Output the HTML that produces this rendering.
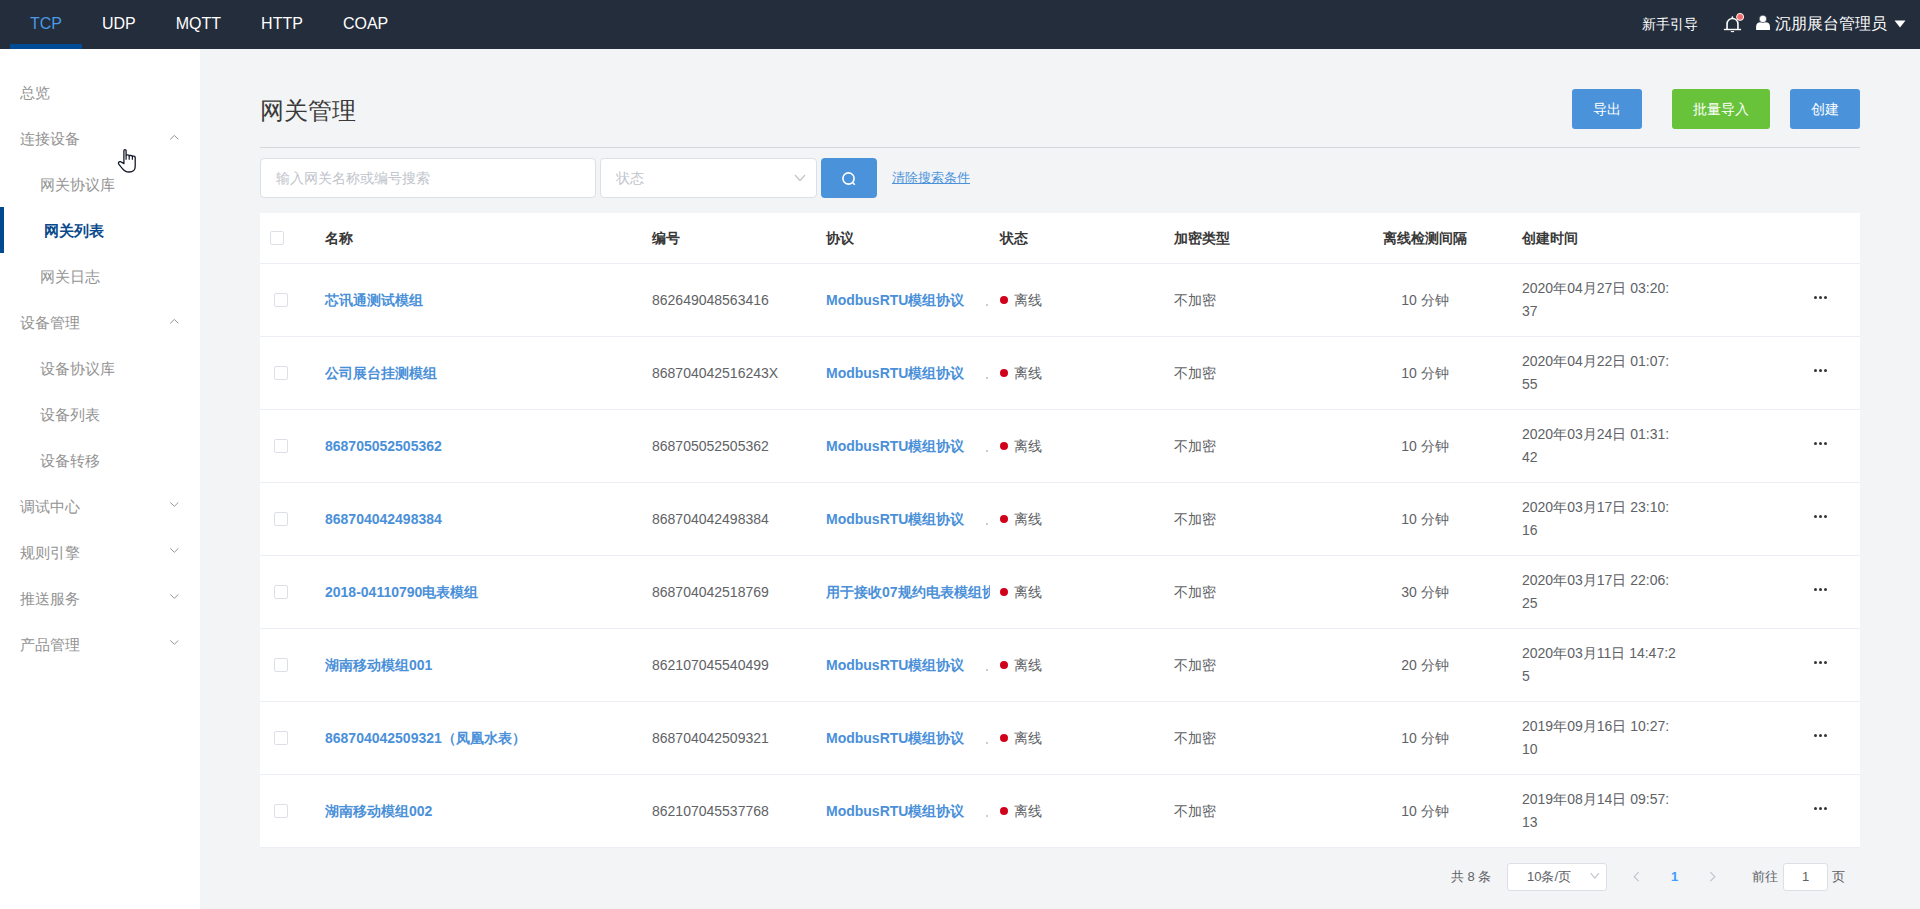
<!DOCTYPE html>
<html><head><meta charset="utf-8">
<style>
*{box-sizing:border-box;margin:0;padding:0}
html,body{width:1920px;height:909px;overflow:hidden}
body{font-family:"Liberation Sans",sans-serif;background:#f3f4f6;position:relative;color:#606266}
.top{position:absolute;left:0;top:0;width:1920px;height:49px;background:#232d3c}
.nav{position:absolute;left:10px;top:0;height:49px;display:flex}
.nav div{padding:0 20px;height:49px;line-height:48px;font-size:16px;color:#fff;position:relative}
.nav div.act{color:#4b9ae6}
.nav div.act:after{content:"";position:absolute;left:0;right:0;bottom:0;height:5px;background:#004c97}
.tr{position:absolute;top:0;height:49px;color:#fff}
.side{position:absolute;left:0;top:49px;width:200px;height:860px;background:#fff}
.si{position:absolute;left:20px;height:46px;line-height:48px;font-size:15px;color:#939393}
.si.sub{left:40px}
.si.act{left:44px;color:#0a4a8c;font-weight:bold}
.abar{position:absolute;left:0;top:207px;width:4px;height:46px;background:#004a8f}
.chev{position:absolute;left:170px;width:9px;height:9px}
.title{position:absolute;left:260px;top:91px;font-size:24px;line-height:40px;color:#3a3a3a}
.btn{position:absolute;top:89px;height:40px;line-height:40px;border-radius:3px;color:#fff;font-size:14px;text-align:center}
.hr{position:absolute;left:260px;top:147px;width:1600px;height:1px;background:#d5d7db}
.inp{position:absolute;top:158px;height:40px;background:#fff;border:1px solid #dcdfe6;border-radius:4px;font-size:14px;line-height:38px;color:#c0c4cc;padding-left:15px}
.sbtn{position:absolute;left:821px;top:158px;width:56px;height:40px;background:#4a93db;border-radius:4px}
.clear{position:absolute;left:892px;top:168px;font-size:13px;line-height:20px;color:#4a93db;text-decoration:underline}
.table{position:absolute;left:260px;top:213px;width:1600px;height:634px;background:#fff}
.th{position:absolute;top:0;height:50px;line-height:50px;font-size:14px;font-weight:bold;color:#383838;white-space:nowrap}
.hline{position:absolute;left:0;width:1600px;height:1px;background:#ebeef5}
.row{position:absolute;left:260px;width:1600px;height:73px}
.cb{position:absolute;width:14px;height:14px;border:1px solid #dcdfe6;border-radius:2px;background:#fff}
.rcb{left:14px;top:29px}
.c{position:absolute;top:0;height:72px;line-height:72px;font-size:14px;white-space:nowrap;color:#606266}
.name{left:65px;color:#4a90d9;font-weight:bold}
.num{left:392px}
.proto{left:566px;width:164px;overflow:hidden;color:#4a90d9;font-weight:bold}
.pdot{position:absolute;left:726px;top:40px;width:2px;height:2px;background:#bbb;border-radius:1px}
.status{left:740px}
.rdot{display:inline-block;width:8px;height:8px;border-radius:50%;background:#d0021b;margin-right:6px;vertical-align:middle;position:relative;top:-1px}
.enc{left:914px}
.intv{left:1078px;width:174px;text-align:center}
.date{left:1262px;line-height:23px;top:13px;height:auto;white-space:nowrap}
.more{position:absolute;left:1554px;top:32px;width:13px;height:4px;display:flex;justify-content:space-between}
.more i{display:block;width:3px;height:3px;border-radius:50%;background:#333}
.pg{position:absolute;top:863px;height:28px;line-height:28px;font-size:13px;color:#606266;white-space:nowrap}
</style></head><body>
<div class="top">
 <div class="nav"><div class="act">TCP</div><div>UDP</div><div>MQTT</div><div>HTTP</div><div>COAP</div></div>
 <div class="tr" style="left:1642px;line-height:48px;font-size:14px">新手引导</div>
 <svg style="position:absolute;left:1715px;top:8px" width="60" height="30" viewBox="0 0 60 30">
  <path d="M12.05 21.45 V16 C12.05 12.8 14.5 10.45 17.5 10.45 C20.5 10.45 22.95 12.8 22.95 16 V21.45" fill="none" stroke="#fff" stroke-width="1.6"/>
  <circle cx="17.4" cy="9.2" r="0.9" fill="#fff"/>
  <path d="M8.9 21.5 H26.1" stroke="#fff" stroke-width="1.4"/>
  <path d="M15.8 23.6 H19.1" stroke="#fff" stroke-width="1.1"/>
  <circle cx="25.1" cy="8.9" r="3.5" fill="#f36b6b" stroke="#fff" stroke-width="1"/>
  <path d="M41.1 22.1 V18.4 C41.1 15.9 43 14.3 45.5 14.3 H50.6 C53.1 14.3 55 15.9 55 18.4 V22.1 Z" fill="#fff"/>
  <circle cx="47.9" cy="10.9" r="3.7" fill="#fff" stroke="#232d3c" stroke-width="0.6"/>
 </svg>
 <div class="tr" style="left:1775px;line-height:47px;font-size:16px">沉朋展台管理员</div>
 <svg style="position:absolute;left:1894px;top:20px" width="12" height="8" viewBox="0 0 12 8"><path d="M0.5 0.5 H11.5 L6 7.5Z" fill="#fff"/></svg>
</div>
<div class="side">
 <div class="si" style="top:20px">总览</div>
 <div class="si" style="top:66px">连接设备</div>
 <div class="si sub" style="top:112px">网关协议库</div>
 <div class="si act" style="top:158px">网关列表</div>
 <div class="si sub" style="top:204px">网关日志</div>
 <div class="si" style="top:250px">设备管理</div>
 <div class="si sub" style="top:296px">设备协议库</div>
 <div class="si sub" style="top:342px">设备列表</div>
 <div class="si sub" style="top:388px">设备转移</div>
 <div class="si" style="top:434px">调试中心</div>
 <div class="si" style="top:480px">规则引擎</div>
 <div class="si" style="top:526px">推送服务</div>
 <div class="si" style="top:572px">产品管理</div>
 <svg class="chev" style="top:84px" width="10" height="7" viewBox="0 0 10 7"><path d="M0.3 5.5 L4.8 1.2 L9.3 5.5" fill="none" stroke="#8f9399" stroke-width="1.1"/></svg><svg class="chev" style="top:268px" width="10" height="7" viewBox="0 0 10 7"><path d="M0.3 5.5 L4.8 1.2 L9.3 5.5" fill="none" stroke="#8f9399" stroke-width="1.1"/></svg><svg class="chev" style="top:451px" width="10" height="7" viewBox="0 0 10 7"><path d="M0.3 1.2 L4.8 5.5 L9.3 1.2" fill="none" stroke="#8f9399" stroke-width="1.1"/></svg><svg class="chev" style="top:497px" width="10" height="7" viewBox="0 0 10 7"><path d="M0.3 1.2 L4.8 5.5 L9.3 1.2" fill="none" stroke="#8f9399" stroke-width="1.1"/></svg><svg class="chev" style="top:543px" width="10" height="7" viewBox="0 0 10 7"><path d="M0.3 1.2 L4.8 5.5 L9.3 1.2" fill="none" stroke="#8f9399" stroke-width="1.1"/></svg><svg class="chev" style="top:589px" width="10" height="7" viewBox="0 0 10 7"><path d="M0.3 1.2 L4.8 5.5 L9.3 1.2" fill="none" stroke="#8f9399" stroke-width="1.1"/></svg>
</div>
<div class="abar"></div>
<div class="title">网关管理</div>
<div class="btn" style="left:1572px;width:70px;background:#4a93db">导出</div>
<div class="btn" style="left:1672px;width:98px;background:#68c23a">批量导入</div>
<div class="btn" style="left:1790px;width:70px;background:#4a93db">创建</div>
<div class="hr"></div>
<div class="inp" style="left:260px;width:336px">输入网关名称或编号搜索</div>
<div class="inp" style="left:600px;width:217px">状态
 <svg style="position:absolute;left:193px;top:15px" width="12" height="8" viewBox="0 0 12 8"><path d="M1 1 L6 6.5 L11 1" fill="none" stroke="#c0c4cc" stroke-width="1.2"/></svg>
</div>
<div class="sbtn"><svg style="position:absolute;left:20px;top:13px" width="16" height="16" viewBox="0 0 16 16"><circle cx="7.5" cy="7.5" r="5.6" fill="none" stroke="#fff" stroke-width="1.6"/><path d="M11.5 11.5 L13.8 13.8" stroke="#fff" stroke-width="1.6"/></svg></div>
<div class="clear">清除搜索条件</div>
<div class="table">
 <div class="cb" style="left:10px;top:18px"></div>
 <div class="th" style="left:65px">名称</div>
 <div class="th" style="left:392px">编号</div>
 <div class="th" style="left:566px">协议</div>
 <div class="th" style="left:740px">状态</div>
 <div class="th" style="left:914px">加密类型</div>
 <div class="th" style="left:1078px;width:174px;text-align:center">离线检测间隔</div>
 <div class="th" style="left:1262px">创建时间</div>
 <div class="hline" style="top:50px"></div><div class="hline" style="top:123px"></div><div class="hline" style="top:196px"></div><div class="hline" style="top:269px"></div><div class="hline" style="top:342px"></div><div class="hline" style="top:415px"></div><div class="hline" style="top:488px"></div><div class="hline" style="top:561px"></div><div class="hline" style="top:634px"></div>
</div>
<div class="row" style="top:264px">
<div class="cb rcb"></div>
<div class="c name">芯讯通测试模组</div>
<div class="c num">862649048563416</div>
<div class="c proto"><span>ModbusRTU模组协议</span></div><div class="pdot"></div>
<div class="c status"><i class="rdot"></i>离线</div>
<div class="c enc">不加密</div>
<div class="c intv">10 分钟</div>
<div class="c date">2020年04月27日 03:20:<br>37</div>
<div class="more"><i></i><i></i><i></i></div>
</div>
<div class="row" style="top:337px">
<div class="cb rcb"></div>
<div class="c name">公司展台挂测模组</div>
<div class="c num">868704042516243X</div>
<div class="c proto"><span>ModbusRTU模组协议</span></div><div class="pdot"></div>
<div class="c status"><i class="rdot"></i>离线</div>
<div class="c enc">不加密</div>
<div class="c intv">10 分钟</div>
<div class="c date">2020年04月22日 01:07:<br>55</div>
<div class="more"><i></i><i></i><i></i></div>
</div>
<div class="row" style="top:410px">
<div class="cb rcb"></div>
<div class="c name">868705052505362</div>
<div class="c num">868705052505362</div>
<div class="c proto"><span>ModbusRTU模组协议</span></div><div class="pdot"></div>
<div class="c status"><i class="rdot"></i>离线</div>
<div class="c enc">不加密</div>
<div class="c intv">10 分钟</div>
<div class="c date">2020年03月24日 01:31:<br>42</div>
<div class="more"><i></i><i></i><i></i></div>
</div>
<div class="row" style="top:483px">
<div class="cb rcb"></div>
<div class="c name">868704042498384</div>
<div class="c num">868704042498384</div>
<div class="c proto"><span>ModbusRTU模组协议</span></div><div class="pdot"></div>
<div class="c status"><i class="rdot"></i>离线</div>
<div class="c enc">不加密</div>
<div class="c intv">10 分钟</div>
<div class="c date">2020年03月17日 23:10:<br>16</div>
<div class="more"><i></i><i></i><i></i></div>
</div>
<div class="row" style="top:556px">
<div class="cb rcb"></div>
<div class="c name">2018-04110790电表模组</div>
<div class="c num">868704042518769</div>
<div class="c proto"><span>用于接收07规约电表模组协议</span></div>
<div class="c status"><i class="rdot"></i>离线</div>
<div class="c enc">不加密</div>
<div class="c intv">30 分钟</div>
<div class="c date">2020年03月17日 22:06:<br>25</div>
<div class="more"><i></i><i></i><i></i></div>
</div>
<div class="row" style="top:629px">
<div class="cb rcb"></div>
<div class="c name">湖南移动模组001</div>
<div class="c num">862107045540499</div>
<div class="c proto"><span>ModbusRTU模组协议</span></div><div class="pdot"></div>
<div class="c status"><i class="rdot"></i>离线</div>
<div class="c enc">不加密</div>
<div class="c intv">20 分钟</div>
<div class="c date">2020年03月11日 14:47:2<br>5</div>
<div class="more"><i></i><i></i><i></i></div>
</div>
<div class="row" style="top:702px">
<div class="cb rcb"></div>
<div class="c name">868704042509321（凤凰水表）</div>
<div class="c num">868704042509321</div>
<div class="c proto"><span>ModbusRTU模组协议</span></div><div class="pdot"></div>
<div class="c status"><i class="rdot"></i>离线</div>
<div class="c enc">不加密</div>
<div class="c intv">10 分钟</div>
<div class="c date">2019年09月16日 10:27:<br>10</div>
<div class="more"><i></i><i></i><i></i></div>
</div>
<div class="row" style="top:775px">
<div class="cb rcb"></div>
<div class="c name">湖南移动模组002</div>
<div class="c num">862107045537768</div>
<div class="c proto"><span>ModbusRTU模组协议</span></div><div class="pdot"></div>
<div class="c status"><i class="rdot"></i>离线</div>
<div class="c enc">不加密</div>
<div class="c intv">10 分钟</div>
<div class="c date">2019年08月14日 09:57:<br>13</div>
<div class="more"><i></i><i></i><i></i></div>
</div>

<div class="pg" style="left:1451px">共 8 条</div>
<div class="pg" style="left:1507px;width:100px;background:#fff;border:1px solid #dcdfe6;border-radius:3px;padding-left:19px;line-height:26px">10条/页
 <svg style="position:absolute;left:82px;top:8px" width="10" height="8" viewBox="0 0 10 8"><path d="M0.7 1.2 L4.8 6.2 L8.9 1.2" fill="none" stroke="#c0c4cc" stroke-width="1.1"/></svg>
</div>
<svg style="position:absolute;left:1632px;top:871px" width="9" height="12" viewBox="0 0 9 12"><path d="M6.6 1.2 L2.2 5.7 L6.6 10.2" fill="none" stroke="#c0c4cc" stroke-width="1.2"/></svg>
<div class="pg" style="left:1671px;color:#409eff;font-weight:bold">1</div>
<svg style="position:absolute;left:1708px;top:871px" width="9" height="12" viewBox="0 0 9 12"><path d="M2.4 1.2 L6.8 5.7 L2.4 10.2" fill="none" stroke="#c0c4cc" stroke-width="1.2"/></svg>
<div class="pg" style="left:1752px">前往</div>
<div class="pg" style="left:1783px;width:45px;background:#fff;border:1px solid #dcdfe6;border-radius:3px;text-align:center;line-height:26px">1</div>
<div class="pg" style="left:1832px">页</div>
<svg style="position:absolute;left:110px;top:140px" width="40" height="40" viewBox="0 0 40 40">
 <path d="M13.9 23.6 V10.7 C13.9 9.2 16.1 9.2 16.1 10.7 V15.6 C16.1 14.5 19.2 14.5 19.2 15.9 C19.2 15.1 22.4 15.1 22.4 16.6 C22.4 15.9 25.2 15.9 25.2 17.4 V26.5 C25.2 30 22.6 32 19 32 C16 32 14 30.8 12.4 28.6 L8.9 24.4 C7.8 23.1 8.8 21.2 10.4 21.6 C11.6 21.9 12.6 22.8 13.9 23.6 Z" fill="#fff" stroke="#151a28" stroke-width="1.3" stroke-linejoin="round"/>
 <path d="M16.1 15.6 V19.8 M19.2 15.9 V19.8 M22.4 16.6 V19.8" stroke="#151a28" stroke-width="1.2"/>
</svg>
</body></html>
